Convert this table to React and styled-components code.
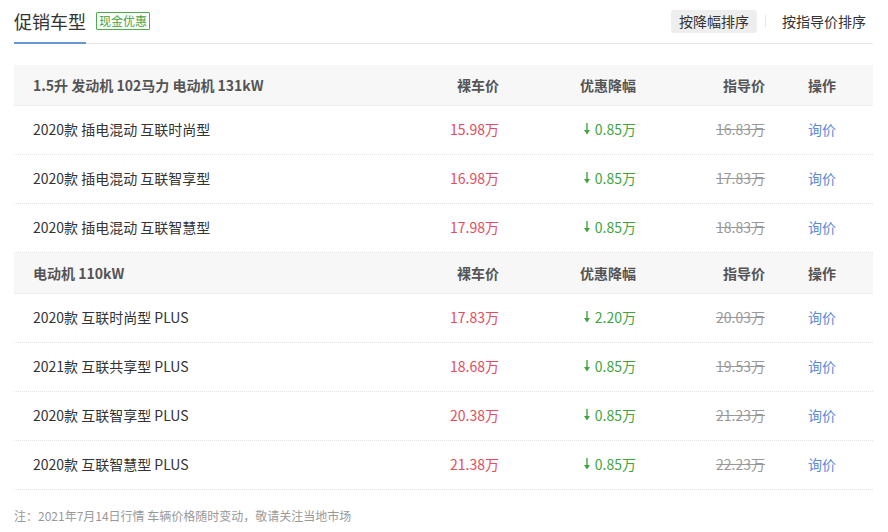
import React from 'react';
import styled, {createGlobalStyle} from "styled-components";

const GlobalStyle = createGlobalStyle`
	body {
		margin: 0;
		background: #fff;
		font-family: "Noto Sans CJK SC", "Microsoft YaHei", sans-serif;
		color: #333;
	}
`

const Page = styled.div`
	width: 859px;
	padding: 0 15px 0 14px;
`

const TitleBar = styled.div`
	display: flex;
	align-items: center;
	height: 44px;
	border-bottom: 1px solid #e6e6e6;
	box-sizing: border-box;
`

const Title = styled.h3`
	margin: 0 0 -1px;
	font-size: 18px;
	font-weight: normal;
	color: #333;
	height: 44px;
	box-sizing: border-box;
	border-bottom: 2px solid #6b96d4;
	display: flex;
	align-items: center;
	padding-bottom: 1px;
`

const Tag = styled.span`
	margin-left: 10px;
	margin-bottom: 2px;
	font-size: 12px;
	line-height: 16px;
	padding: 0 2px;
	border: 1px solid #4aae4a;
	color: #3fa53f;
	border-radius: 1px;
`

const Sorts = styled.div`
	margin-left: auto;
	display: flex;
	align-items: center;
	gap: 8px;
	margin-bottom: 1px;
	margin-right: -1px;
`

const SortBtn = styled.span`
	font-size: 14px;
	line-height: 23px;
	padding: 0 8px;
	border-radius: 3px;
	color: #333;
	background: ${p => p.$active ? '#eeeeee' : 'transparent'};
`

const Sep = styled.span`
	width: 1px;
	height: 12px;
	background: #e6e6e6;
`

const Table = styled.div`
	margin-top: 21px;
`

const Row = styled.div`
	display: grid;
	grid-template-columns: 385px 100px 137px 129px 108px;
	align-items: center;
	height: ${p => p.$head ? '41px' : '49px'};
	padding-bottom: ${p => p.$head ? '1px' : '3px'};
	box-sizing: border-box;
	background: ${p => p.$head ? '#f7f7f7' : '#fff'};
	border-bottom: 1px ${p => p.$head ? 'solid #efefef' : 'dotted #e4e4e4'};
	font-size: 14px;
	font-weight: ${p => p.$head ? 'bold' : 'normal'};
	color: ${p => p.$head ? '#555' : '#333'};
`

const Name = styled.div`
	padding-left: 19px;
	white-space: nowrap;
`

const Cell = styled.div`
	color: ${p => p.$color || 'inherit'};
	text-decoration: ${p => p.$strike ? 'line-through' : 'none'};
	display: flex;
	justify-content: flex-end;
	align-items: center;
	gap: 4px;
`

const Op = styled.div`
	padding-left: 43px;
	color: ${p => p.$link ? '#5b8ad9' : 'inherit'};
`

const Note = styled.div`
	margin-top: 17px;
	font-size: 12px;
	color: #999;
`

const Arrow = () => (
	<svg width="8" height="13" viewBox="0 0 8 13">
		<line x1="4" y1="1" x2="4" y2="10" stroke="#3fa53f" strokeWidth="1.4"/>
		<path d="M1 8 L4 12.5 L7 8 Z" fill="#3fa53f"/>
	</svg>
)

const groups = [
	{
		title: '1.5升 发动机 102马力 电动机 131kW',
		rows: [
			['2020款 插电混动 互联时尚型', '15.98万', '0.85万', '16.83万'],
			['2020款 插电混动 互联智享型', '16.98万', '0.85万', '17.83万'],
			['2020款 插电混动 互联智慧型', '17.98万', '0.85万', '18.83万'],
		]
	},
	{
		title: '电动机 110kW',
		rows: [
			['2020款 互联时尚型 PLUS', '17.83万', '2.20万', '20.03万'],
			['2021款 互联共享型 PLUS', '18.68万', '0.85万', '19.53万'],
			['2020款 互联智享型 PLUS', '20.38万', '0.85万', '21.23万'],
			['2020款 互联智慧型 PLUS', '21.38万', '0.85万', '22.23万'],
		]
	}
]

const App = () => {
	return (
		<Page>
			<GlobalStyle/>
			<TitleBar>
				<Title>促销车型</Title>
				<Tag>现金优惠</Tag>
				<Sorts>
					<SortBtn $active>按降幅排序</SortBtn>
					<Sep/>
					<SortBtn>按指导价排序</SortBtn>
				</Sorts>
			</TitleBar>
			<Table>
				{groups.map(g => (
					<React.Fragment key={g.title}>
						<Row $head>
							<Name>{g.title}</Name>
							<Cell>裸车价</Cell>
							<Cell>优惠降幅</Cell>
							<Cell>指导价</Cell>
							<Op>操作</Op>
						</Row>
						{g.rows.map(r => (
							<Row key={r[0]}>
								<Name>{r[0]}</Name>
								<Cell $color="#e54d5c">{r[1]}</Cell>
								<Cell $color="#3fa53f"><Arrow/>{r[2]}</Cell>
								<Cell $color="#999" $strike>{r[3]}</Cell>
								<Op $link>询价</Op>
							</Row>
						))}
					</React.Fragment>
				))}
			</Table>
			<Note>注：2021年7月14日行情 车辆价格随时变动，敬请关注当地市场</Note>
		</Page>
	)
}

export default App
